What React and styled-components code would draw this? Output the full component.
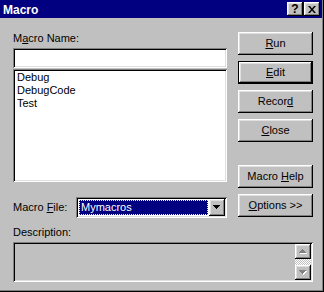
import React from 'react';
import styled, { createGlobalStyle, css } from 'styled-components';

const GlobalStyle = createGlobalStyle`
  * { box-sizing: border-box; }
  html, body { margin: 0; padding: 0; background: #c0c0c0; }
  body {
    font-family: "Liberation Sans", Arial, sans-serif;
    font-size: 11px;
    color: #000;
  }
`

const raised = css`
  box-shadow: inset -1px -1px #000, inset 1px 1px #fff, inset -2px -2px #808080, inset 2px 2px #dfdfdf;
`
const sunken = css`
  box-shadow: inset 1px 1px #808080, inset -1px -1px #fff, inset 2px 2px #000, inset -2px -2px #dfdfdf;
`

const S_window = styled.div`
  width: 324px;
  height: 292px;
  background: #c0c0c0;
  box-shadow: inset -1px -1px #000, inset -2px -2px #808080;
  display: flex;
  flex-direction: column;
`
const S_titlebar = styled.div`
  height: 18px;
  width: 322px;
  background: #000080;
  display: flex;
  align-items: center;
  padding: 0 2px 0 3px;
`
const S_title = styled.span`
  flex: 1;
  color: #fff;
  font-weight: 700;
  font-size: 12px;
  line-height: 18px;
  padding-top: 1px;
`
const S_capBtn = styled.div`
  ${raised}
  width: 16px;
  height: 14px;
  background: #c0c0c0;
  display: flex;
  align-items: center;
  justify-content: center;
  font-weight: 700;
  font-size: 12px;
  line-height: 14px;
  & + & { margin-left: 1px; }
`
const S_body = styled.div`
  flex: 1;
  display: flex;
  flex-direction: column;
  padding: 14px 11px 0 13px;
`
const S_top = styled.div`
  display: flex;
  gap: 11px;
`
const S_leftCol = styled.div`
  width: 214px;
  display: flex;
  flex-direction: column;
`
const S_label = styled.div`
  height: 13px;
  line-height: 13px;
  margin-top: ${({ mt }) => mt || 0}px;
`
const S_input = styled.div`
  ${sunken}
  height: 20px;
  margin-top: 3px;
  background: #fff;
`
const S_list = styled.div`
  ${sunken}
  height: 113px;
  margin-top: 1px;
  background: #fff;
  padding: 2px 2px 2px 4px;
`
const S_item = styled.div`
  line-height: 13px;
  height: 13px;
`
const S_fileRow = styled.div`
  margin-top: 15px;
  display: flex;
  align-items: center;
  justify-content: space-between;
`
const S_combo = styled.div`
  ${sunken}
  width: 151px;
  height: 21px;
  background: #fff;
  padding: 2px;
  display: flex;
`
const S_comboValue = styled.div`
  flex: 1;
  padding: 1px;
`
const S_comboSel = styled.div`
  height: 100%;
  background: #000080;
  color: #fff;
  border: 1px dotted #ffff7f;
  line-height: 13px;
  padding-left: 1px;
`
const S_smallBtn = styled.div`
  ${raised}
  width: 16px;
  height: ${({ h }) => h || 17}px;
  background: #c0c0c0;
  display: flex;
  align-items: center;
  justify-content: center;
`
const S_rightCol = styled.div`
  width: 75px;
  display: flex;
  flex-direction: column;
  gap: 6px;
`
const S_btn = styled.div`
  ${raised}
  height: 23px;
  background: #c0c0c0;
  display: flex;
  align-items: center;
  justify-content: center;
  line-height: 13px;
  margin-top: ${({ mt }) => mt || 0}px;
  ${({ def }) => def && css`
    border: 1px solid #000;
  `}
`
const S_desc = styled.div`
  ${sunken}
  width: 300px;
  height: 40px;
  margin-top: 3px;
  padding: 2px;
  display: flex;
  justify-content: flex-end;
`
const S_scroll = styled.div`
  width: 16px;
  display: flex;
  flex-direction: column;
`
const S_track = styled.div`
  flex: 1;
  background-image: conic-gradient(#fff 25%, #c0c0c0 0 50%, #fff 0 75%, #c0c0c0 0);
  background-size: 2px 2px;
`

const Arrow = ({ dir, disabled }) => (
  <svg width="8" height="5" viewBox="0 0 8 5" shapeRendering="crispEdges">
    {disabled && (
      <polygon
        points={dir === 'up' ? '4.5,1 8,5 1,5' : '1,1 8,1 4.5,5'}
        fill="#fff"
      />
    )}
    <polygon
      points={dir === 'up' ? '3.5,0 7,4 0,4' : '0,0 7,0 3.5,4'}
      fill={disabled ? '#808080' : '#000'}
    />
  </svg>
)

const App = () => {
  return (
  <>
    <GlobalStyle />
    <S_window>

      <S_titlebar>
        <S_title>Macro</S_title>
        <S_capBtn>?</S_capBtn>
        <S_capBtn>
          <svg width="8" height="7" viewBox="0 0 8 7">
            <path d="M0 0h2l2 2.5L6 0h2L5 3.5 8 7H6L4 4.5 2 7H0l3-3.5z" fill="#000" />
          </svg>
        </S_capBtn>
      </S_titlebar>

      <S_body>
        <S_top>

          <S_leftCol>
            <S_label>M<u>a</u>cro Name:</S_label>
            <S_input />
            <S_list>
              <S_item>Debug</S_item>
              <S_item>DebugCode</S_item>
              <S_item>Test</S_item>
            </S_list>
            <S_fileRow>
              <S_label>Macro <u>F</u>ile:</S_label>
              <S_combo>
                <S_comboValue>
                  <S_comboSel>Mymacros</S_comboSel>
                </S_comboValue>
                <S_smallBtn>
                  <Arrow dir="down" />
                </S_smallBtn>
              </S_combo>
            </S_fileRow>
          </S_leftCol>

          <S_rightCol>
            <S_btn><span><u>R</u>un</span></S_btn>
            <S_btn def><span><u>E</u>dit</span></S_btn>
            <S_btn><span>Recor<u>d</u></span></S_btn>
            <S_btn><span><u>C</u>lose</span></S_btn>
            <S_btn mt={17}><span>Macro <u>H</u>elp</span></S_btn>
            <S_btn><span><u>O</u>ptions &gt;&gt;</span></S_btn>
          </S_rightCol>

        </S_top>

        <S_label mt={8}>Description:</S_label>
        <S_desc>
          <S_scroll>
            <S_smallBtn h={15}><Arrow dir="up" disabled /></S_smallBtn>
            <S_track />
            <S_smallBtn h={15}><Arrow dir="down" disabled /></S_smallBtn>
          </S_scroll>
        </S_desc>
      </S_body>

    </S_window>
  </>
  );
}

export default App;
